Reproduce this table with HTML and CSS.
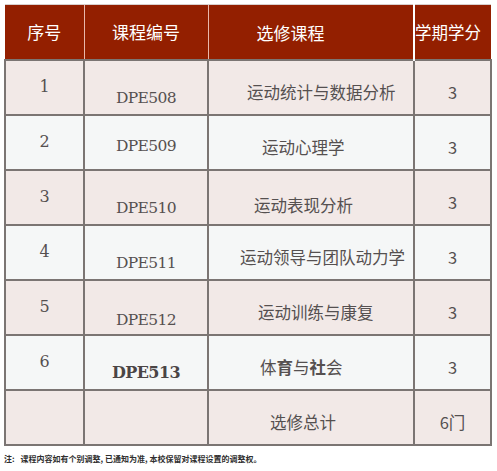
FILE: index.html
```html
<!DOCTYPE html>
<html lang="zh">
<head>
<meta charset="utf-8">
<title>选修课程</title>
<link rel="stylesheet" href="styles.css">
</head>
<body>
<div class="page">
  <table class="courses">
    <colgroup>
      <col class="c-no">
      <col class="c-code">
      <col class="c-name">
      <col class="c-credit">
    </colgroup>
    <thead>
      <tr class="head">
        <th class="h-no">序号</th>
        <th class="h-code">课程编号</th>
        <th class="h-name">选修课程</th>
        <th class="h-credit">学期学分</th>
      </tr>
    </thead>
    <tbody>
      <tr class="odd">
        <td class="no">1</td>
        <td class="code">DPE508</td>
        <td class="name pad-40">运动统计与数据分析</td>
        <td class="credit">3</td>
      </tr>
      <tr class="even">
        <td class="no">2</td>
        <td class="code code-mid">DPE509</td>
        <td class="name pad-55">运动心理学</td>
        <td class="credit">3</td>
      </tr>
      <tr class="odd">
        <td class="no">3</td>
        <td class="code">DPE510</td>
        <td class="name pad-47 low">运动表现分析</td>
        <td class="credit">3</td>
      </tr>
      <tr class="even">
        <td class="no">4</td>
        <td class="code">DPE511</td>
        <td class="name pad-33">运动领导与团队动力学</td>
        <td class="credit">3</td>
      </tr>
      <tr class="odd">
        <td class="no">5</td>
        <td class="code code-low">DPE512</td>
        <td class="name pad-51">运动训练与康复</td>
        <td class="credit">3</td>
      </tr>
      <tr class="even">
        <td class="no">6</td>
        <td class="code strong">DPE513</td>
        <td class="name pad-53">体<b>育</b>与<b>社</b>会</td>
        <td class="credit">3</td>
      </tr>
      <tr class="odd">
        <td class="no"></td>
        <td class="code"></td>
        <td class="name pad-63">选修总计</td>
        <td class="credit">6门</td>
      </tr>
    </tbody>
  </table>
  <p class="note"><span class="note-label">注:</span>课程内容如有个别调整, 已通知为准, 本校保留对课程设置的调整权。</p>
</div>
</body>
</html>
```

FILE: styles.css
```css
html, body {
  margin: 0;
  padding: 0;
  background: #ffffff;
}

.page {
  padding: 4px 7px 0 4px;
  font-family: "Noto Sans CJK SC", "Noto Sans", sans-serif;
}

.courses {
  width: 486px;
  border-collapse: collapse;
  table-layout: fixed;
}

.c-no { width: 79px; }
.c-code { width: 124px; }
.c-name { width: 206px; }
.c-credit { width: 77px; }

.courses tr { height: 55px; }

.courses th {
  background: #931f00;
  color: #ffffff;
  font-weight: 400;
  font-size: 17px;
  line-height: 20px;
  padding: 0;
  border-left: 1px solid #e9b8ab;
  border-top: 1px solid #d8d0ce;
  text-align: center;
  vertical-align: middle;
}

.courses th.h-no { border-left: none; }
.courses th.h-name { text-align: left; padding-left: 48px; padding-top: 2px; }
.courses th.h-credit {
  text-align: left;
  padding-left: 0;
  border-left: 2px solid #ffffff;
  white-space: nowrap;
  font-size: 16.5px;
}

.courses td {
  padding: 0;
  line-height: 20px;
  border: 2px solid #7b7573;
  text-align: center;
  vertical-align: middle;
  color: #555050;
}

.courses tr.odd td { background: #f2e9e7; }
.courses tr.even td { background: #f5f7f7; }

.no {
  font-family: "DejaVu Serif", serif;
  font-size: 16px;
}

.code {
  font-family: "DejaVu Serif", serif;
  font-size: 15.5px;
  letter-spacing: -0.6px;
  padding-top: 21px !important;
}

.code-mid { padding-top: 7px !important; }
.code-low { padding-top: 26px !important; }
.code.strong { font-weight: 700; font-size: 16px; color: #4a4545; }

.name {
  font-size: 16.5px;
  text-align: left !important;
  padding-top: 9px !important;
  white-space: nowrap;
}

.name.low { padding-top: 15px !important; }
.name b { font-weight: 700; }

.pad-33 { padding-left: 31px !important; }
.pad-40 { padding-left: 38px !important; }
.pad-47 { padding-left: 45px !important; }
.pad-51 { padding-left: 49px !important; }
.pad-53 { padding-left: 51px !important; }
.pad-55 { padding-left: 53px !important; }
.pad-63 { padding-left: 61px !important; }

.credit {
  font-size: 16.5px;
  padding-top: 9px !important;
}

.note {
  margin: 8px 0 0 0;
  font-size: 8px;
  line-height: 10px;
  color: #2f2f2f;
  font-weight: 700;
  white-space: nowrap;
}

.note-label { margin-right: 6px; }
```
